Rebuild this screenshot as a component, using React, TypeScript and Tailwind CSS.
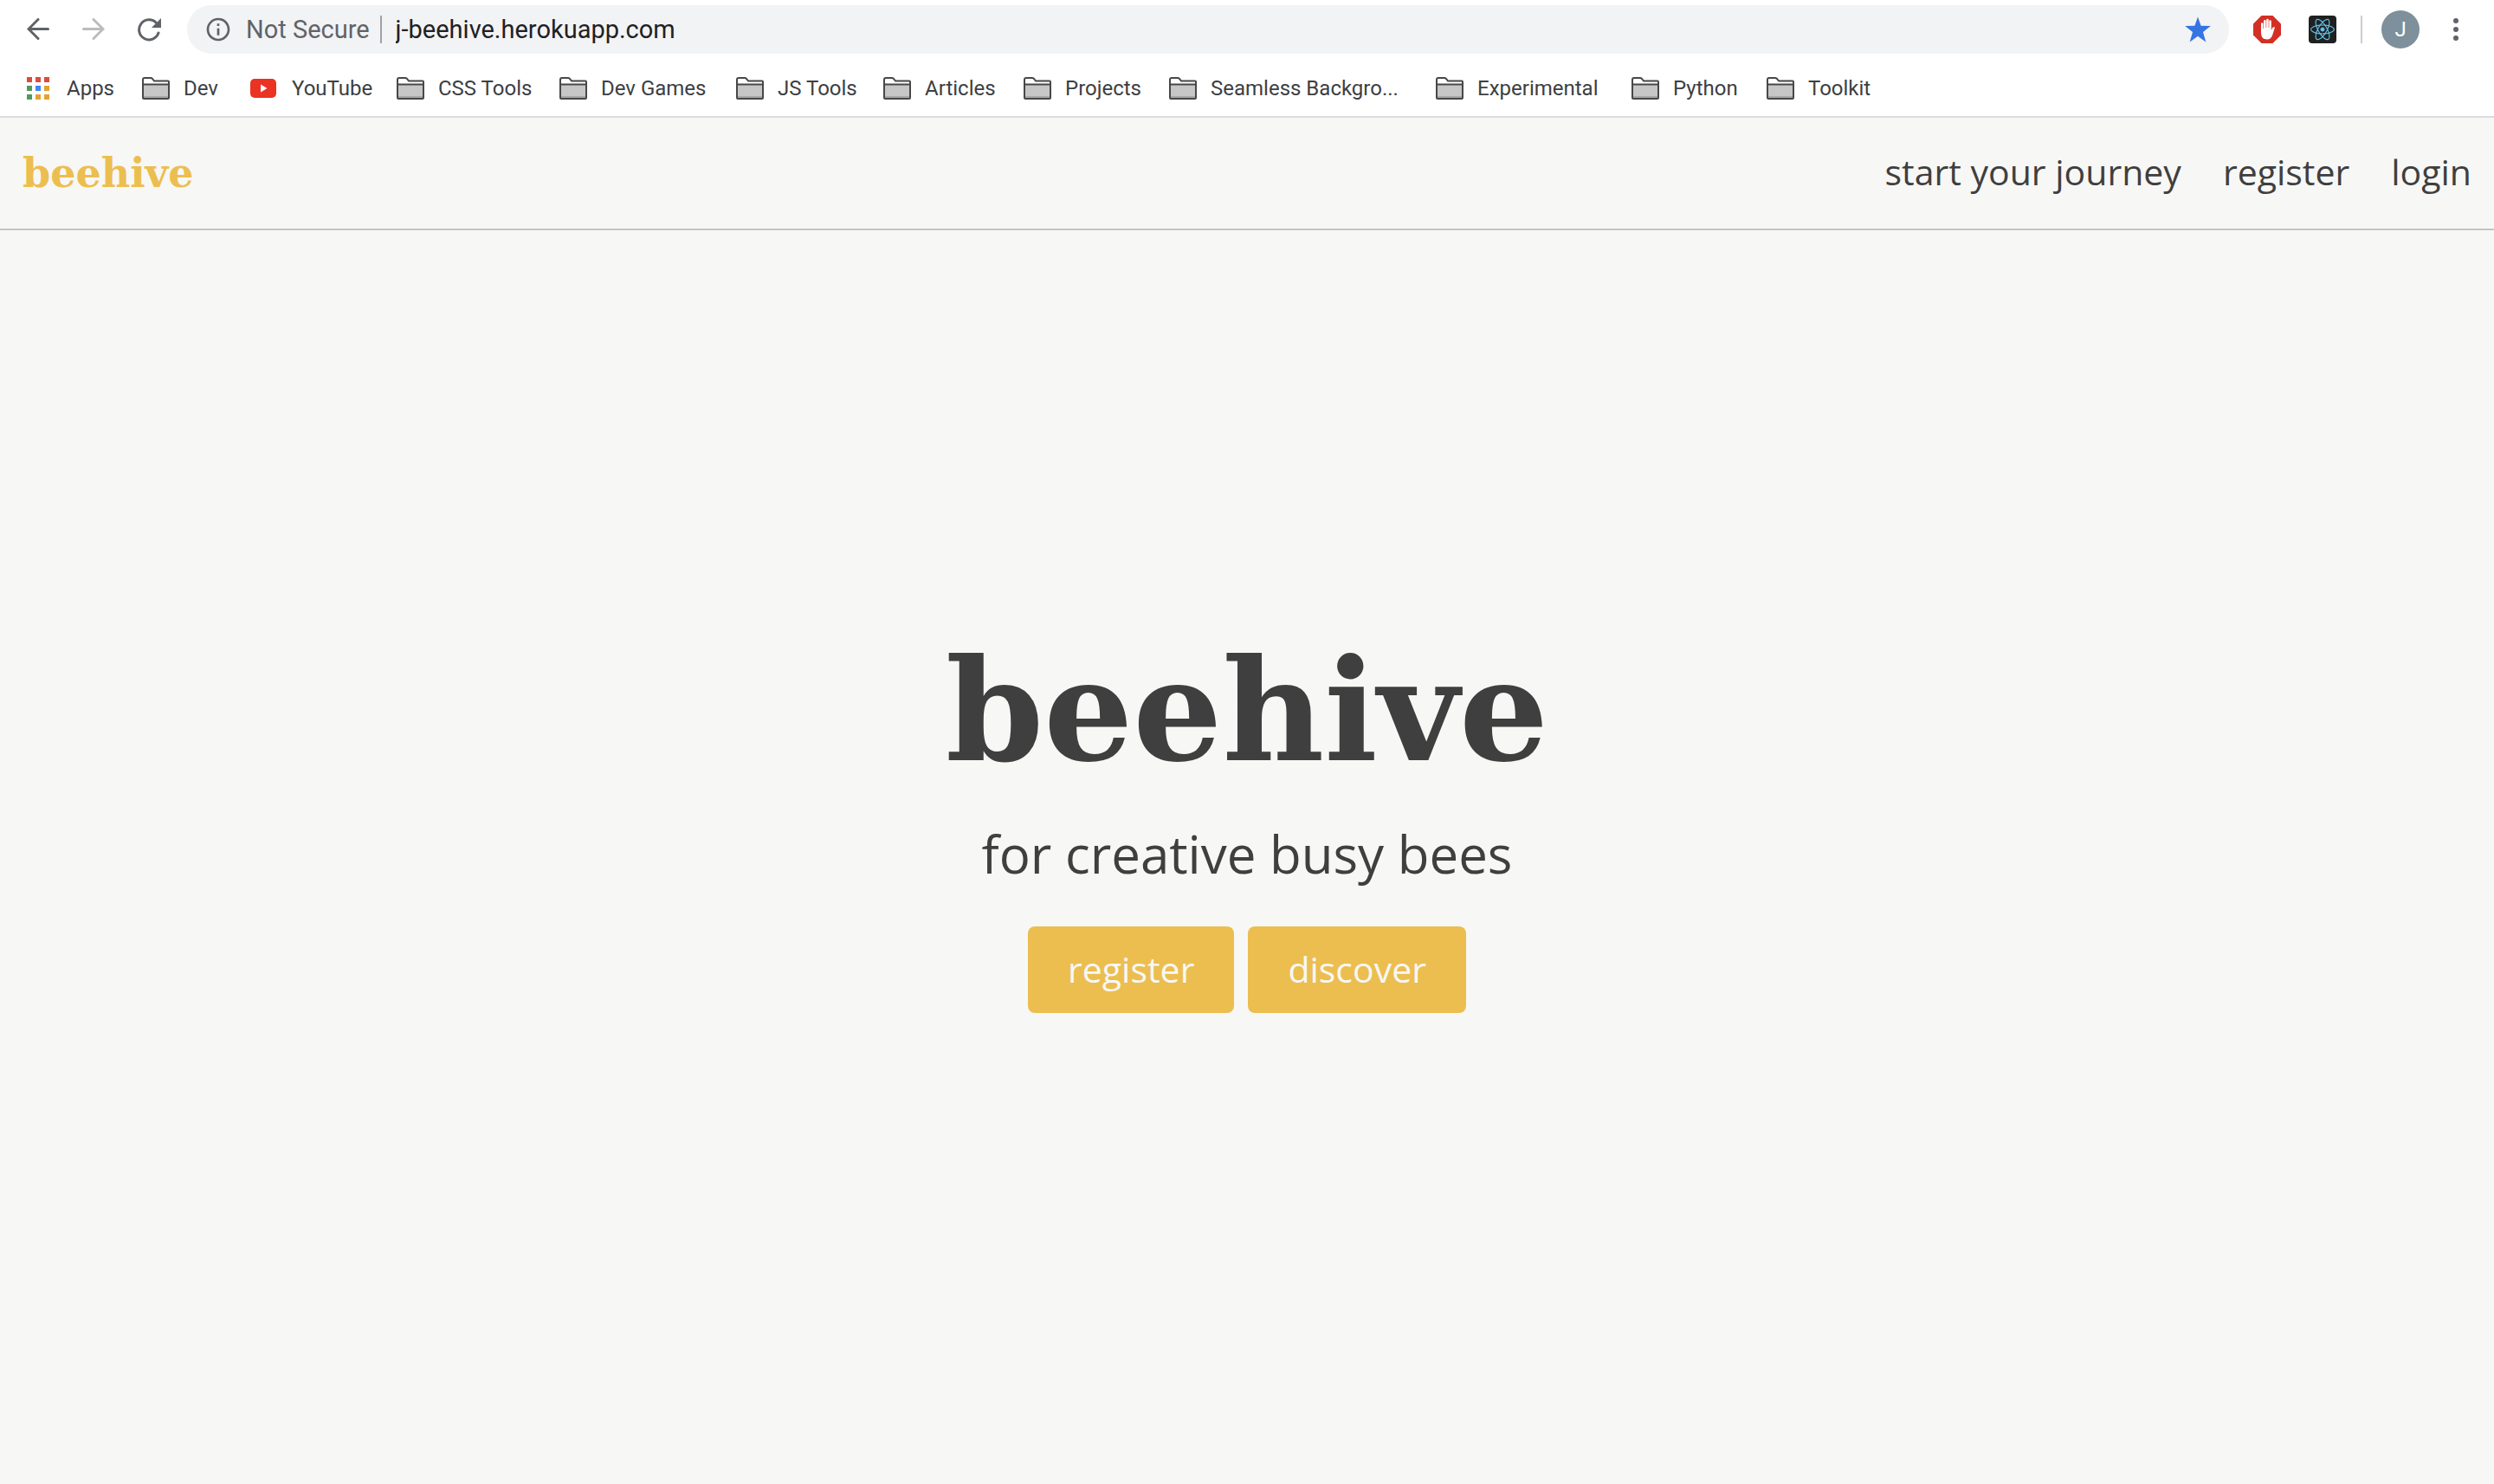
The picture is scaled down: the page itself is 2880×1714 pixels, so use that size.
import React from "react";
import { FaReact } from "react-icons/fa";
import { MdInfoOutline } from "react-icons/md";

type Bookmark = { label: string; kind: "apps" | "folder" | "youtube"; width: string };

const bookmarks: Bookmark[] = [
  { label: "Apps", kind: "apps", width: "w-[133px]" },
  { label: "Dev", kind: "folder", width: "w-[125px]" },
  { label: "YouTube", kind: "youtube", width: "w-[169px]" },
  { label: "CSS Tools", kind: "folder", width: "w-[188px]" },
  { label: "Dev Games", kind: "folder", width: "w-[204px]" },
  { label: "JS Tools", kind: "folder", width: "w-[170px]" },
  { label: "Articles", kind: "folder", width: "w-[162px]" },
  { label: "Projects", kind: "folder", width: "w-[168px]" },
  { label: "Seamless Backgro...", kind: "folder", width: "w-[308px]" },
  { label: "Experimental", kind: "folder", width: "w-[226px]" },
  { label: "Python", kind: "folder", width: "w-[156px]" },
  { label: "Toolkit", kind: "folder", width: "w-[140px]" },
];

const appColors = ["#e0493e", "#e0493e", "#e0493e", "#529a5b", "#4285f4", "#e3a234", "#529a5b", "#e3a234", "#e3a234"];

function BookmarkIcon({ kind }: { kind: Bookmark["kind"] }) {
  if (kind === "apps") {
    return (
      <svg className="h-[26px] w-[26px] shrink-0" viewBox="0 0 26 26" aria-hidden="true">
        {appColors.map((color, i) => (
          <rect key={i} x={(i % 3) * 10} y={Math.floor(i / 3) * 10} width="6" height="6" fill={color} />
        ))}
      </svg>
    );
  }
  if (kind === "youtube") {
    return (
      <svg className="h-[26px] w-[30px] shrink-0" viewBox="0 0 30 26" aria-hidden="true">
        <rect x="0" y="2" width="30" height="22" rx="5" fill="#ea3323" />
        <path d="M12 8.500v9l7.500-4.500z" fill="#fff" />
      </svg>
    );
  }
  return (
    <svg className="h-[26px] w-8 shrink-0" viewBox="0 0 32 26" aria-hidden="true">
      <path d="M1 24V3q0-2 2-2h7q1 0 2 1l2 2.500h16q1 0 1 1V24q0 1-1 1H2q-1 0-1-1z" fill="#fff" stroke="#474747" strokeWidth="2" />
      <path d="M2 9h28v15H2z" fill="#c6c6c6" />
      <path d="M2 22h28v2H2z" fill="#a8a8a8" />
      <path d="M1 8.500h30" stroke="#474747" strokeWidth="2" />
    </svg>
  );
}

function Toolbar() {
  return (
    <div className="flex h-[68px] items-center bg-white pr-10 pl-[31px]">
      <button aria-label="Back" className="mr-[38px]">
        <svg className="h-[26px] w-[26px]" viewBox="0 0 26 26" fill="none" stroke="#5f6368" strokeWidth="3" strokeLinecap="round" aria-hidden="true">
          <path d="M24.500 12.500H2M13 1.500L2 12.500l11 11" />
        </svg>
      </button>
      <button aria-label="Forward" className="mr-[38px]">
        <svg className="h-[26px] w-[26px]" viewBox="0 0 26 26" fill="none" stroke="#babcbe" strokeWidth="3" strokeLinecap="round" aria-hidden="true">
          <path d="M1.500 12.500H24M13 1.500l11 11-11 11" />
        </svg>
      </button>
      <button aria-label="Reload" className="mr-[30px]">
        <svg className="h-[27px] w-[27px]" viewBox="0 0 27 27" aria-hidden="true">
          <path d="M24 17A11.500 11.500 0 1 1 21.500 5.500" fill="none" stroke="#5f6368" strokeWidth="3" strokeLinecap="round" />
          <path d="M27 0v11H16z" fill="#5f6368" />
        </svg>
      </button>
      <div className="flex h-14 flex-1 items-center rounded-full bg-[#f1f3f4] pr-[21px] pl-5">
        <MdInfoOutline className="h-8 w-8 shrink-0 text-[#5f6368]" aria-hidden="true" />
        <span className="ml-4 text-[29px] leading-8 whitespace-nowrap text-[#5f6368]">Not Secure</span>
        <span className="mr-4 ml-3 h-8 w-0.5 shrink-0 bg-[#9fa1a4]" />
        <input aria-label="Address" defaultValue="j-beehive.herokuapp.com" className="min-w-0 flex-1 bg-transparent text-[29px] leading-8 text-[#202124] outline-none" />
        <button aria-label="Bookmark this page">
          <svg className="h-[30px] w-[30px]" viewBox="0 0 30 30" fill="#3574e3" aria-hidden="true">
            <path d="M15 0.500l3.600 10.300 11.200.2-8.800 7 3.300 11.500L15 22.800 5.700 29.500 9 18 .2 11l11.200-.2z" />
          </svg>
        </button>
      </div>
      <button aria-label="Ad blocker" className="ml-7">
        <svg className="h-8 w-8" viewBox="0 0 32 32" aria-hidden="true">
          <path d="M9.500 0h13L32 9.500v13L22.500 32h-13L0 22.500v-13z" fill="#d33025" />
          <path d="M9 20V9.500a1.200 1.200 0 0 1 2.500 0V15h.6V6.200a1.200 1.200 0 0 1 2.500 0V14h.6V5a1.200 1.200 0 0 1 2.500 0v9h.6V6.500a1.200 1.200 0 0 1 2.500 0V17l1.200-2.500q1-1.800 3-1L22 23q-2 4.500-6 4.500-7 0-7-7.500z" fill="#fff" />
        </svg>
      </button>
      <button aria-label="React developer tools" className="ml-8 flex h-8 w-8 items-center justify-center rounded-sm bg-[#202020]">
        <FaReact className="h-7 w-7 text-[#61bfe8]" />
      </button>
      <span className="ml-7 h-8 w-0.5 bg-[#cdcdcd]" />
      <button aria-label="Profile" className="ml-[22px] flex h-11 w-11 items-center justify-center rounded-full bg-[#7d909b] text-2xl text-white">J</button>
      <button aria-label="Menu" className="ml-[38px]">
        <svg className="h-[26px] w-[8px]" viewBox="0 0 8 26" fill="#5f6368" aria-hidden="true">
          <circle cx="4" cy="3" r="3" />
          <circle cx="4" cy="13" r="3" />
          <circle cx="4" cy="23" r="3" />
        </svg>
      </button>
    </div>
  );
}

export default function App() {
  return (
    <div className="flex min-h-screen flex-col bg-[#f7f7f5] font-['Open_Sans',sans-serif] text-[#3f3f3f]">
      <div className="border-b-2 border-[#dcdcdf] bg-white font-[Roboto,sans-serif]">
        <Toolbar />
        <nav aria-label="Bookmarks" className="flex h-[66px] items-center pt-0.5 pl-[31px]">
          {bookmarks.map((b) => (
            <a key={b.label} href="#" className={"flex shrink-0 items-center gap-4 text-2xl whitespace-nowrap text-[#3c4043] " + b.width}>
              <span className={b.kind === "apps" ? "flex w-[30px] shrink-0" : "flex w-8 shrink-0"}>
                <BookmarkIcon kind={b.kind} />
              </span>
              {b.label}
            </a>
          ))}
        </nav>
      </div>
      <header className="flex h-[130px] items-center justify-between border-b-2 border-[#c4c4c4] px-[26px]">
        <a href="#" className="font-['DejaVu_Serif',serif] text-[46px] leading-none font-bold text-[#ecbe4f]">beehive</a>
        <nav aria-label="Main" className="flex gap-12 pb-1 text-[41px] leading-none">
          <a href="#">start your journey</a>
          <a href="#">register</a>
          <a href="#">login</a>
        </nav>
      </header>
      <main className="flex flex-1 flex-col items-center justify-center pb-[70px]">
        <h1 className="font-['DejaVu_Serif',serif] text-[162px] leading-none font-bold">beehive</h1>
        <p className="mt-12 text-[60px] leading-[72px]">for creative busy bees</p>
        <div className="mt-12 flex gap-4 text-[41px] text-[#f7f7f5]">
          <button className="h-[100px] rounded-lg bg-[#ecbe4f] px-[46px]">register</button>
          <button className="h-[100px] rounded-lg bg-[#ecbe4f] px-[46px]">discover</button>
        </div>
      </main>
    </div>
  );
}
